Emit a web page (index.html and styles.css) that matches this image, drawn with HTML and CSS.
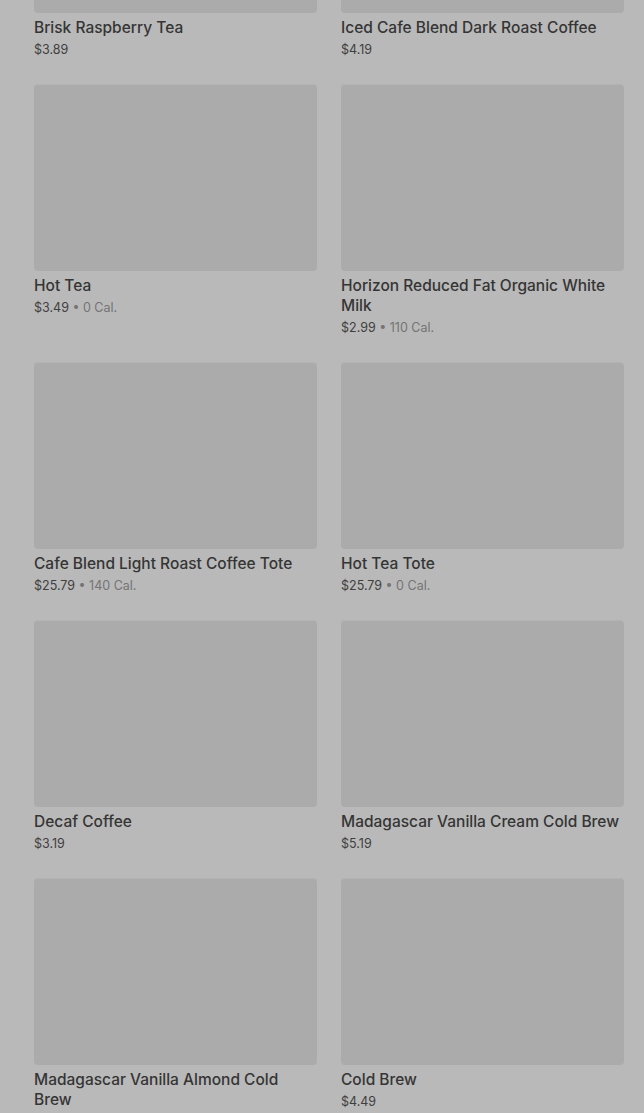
FILE: index.html
```html
<!DOCTYPE html>
<html lang="en">
<head>
  <meta charset="UTF-8">
  <title>Menu</title>
  <link rel="stylesheet" href="styles.css">
</head>
<body>
  <div class="menu-grid">
    <div class="item">
      <div class="thumb"></div>
      <div class="name">Brisk Raspberry Tea</div>
      <div class="meta">$3.89</div>
    </div>
    <div class="item">
      <div class="thumb"></div>
      <div class="name">Iced Cafe Blend Dark Roast Coffee</div>
      <div class="meta">$4.19</div>
    </div>

    <div class="item">
      <div class="thumb"></div>
      <div class="name">Hot Tea</div>
      <div class="meta">$3.49 <span class="cal">• 0 Cal.</span></div>
    </div>
    <div class="item">
      <div class="thumb"></div>
      <div class="name">Horizon Reduced Fat Organic White Milk</div>
      <div class="meta">$2.99 <span class="cal">• 110 Cal.</span></div>
    </div>

    <div class="item">
      <div class="thumb"></div>
      <div class="name">Cafe Blend Light Roast Coffee Tote</div>
      <div class="meta">$25.79 <span class="cal">• 140 Cal.</span></div>
    </div>
    <div class="item">
      <div class="thumb"></div>
      <div class="name">Hot Tea Tote</div>
      <div class="meta">$25.79 <span class="cal">• 0 Cal.</span></div>
    </div>

    <div class="item">
      <div class="thumb"></div>
      <div class="name">Decaf Coffee</div>
      <div class="meta">$3.19</div>
    </div>
    <div class="item">
      <div class="thumb"></div>
      <div class="name">Madagascar Vanilla Cream Cold Brew</div>
      <div class="meta">$5.19</div>
    </div>

    <div class="item">
      <div class="thumb"></div>
      <div class="name">Madagascar Vanilla Almond Cold Brew</div>
      <div class="meta">$4.49</div>
    </div>
    <div class="item">
      <div class="thumb"></div>
      <div class="name">Cold Brew</div>
      <div class="meta">$4.49</div>
    </div>
  </div>
</body>
</html>
```

FILE: styles.css
```css
* {
  box-sizing: border-box;
  margin: 0;
  padding: 0;
  font-family: Inter, Roboto, 'Liberation Sans', sans-serif;
}
html,
body {
  background-color: #b9b9b9;
  overflow: hidden;
}
body {
  height: 1113px;
}
.menu-grid {
  display: grid;
  grid-template-columns: 283px 283px;
  column-gap: 24px;
  row-gap: 24px;
  padding-left: 34px;
  margin-top: -174px;
}
.item {
  display: flex;
  flex-direction: column;
}
.thumb {
  height: 187px;
  background-color: #ababab;
  border-radius: 4px;
  border-top: 1px solid #b3b3b3;
}
.name {
  margin-top: 5px;
  font-size: 15.5px;
  font-weight: 500;
  line-height: 20px;
  color: #353535;
}
.meta {
  margin-top: 2px;
  font-size: 12.5px;
  line-height: 20px;
  color: #3f3f3f;
}
.cal {
  color: #747474;
}
```
